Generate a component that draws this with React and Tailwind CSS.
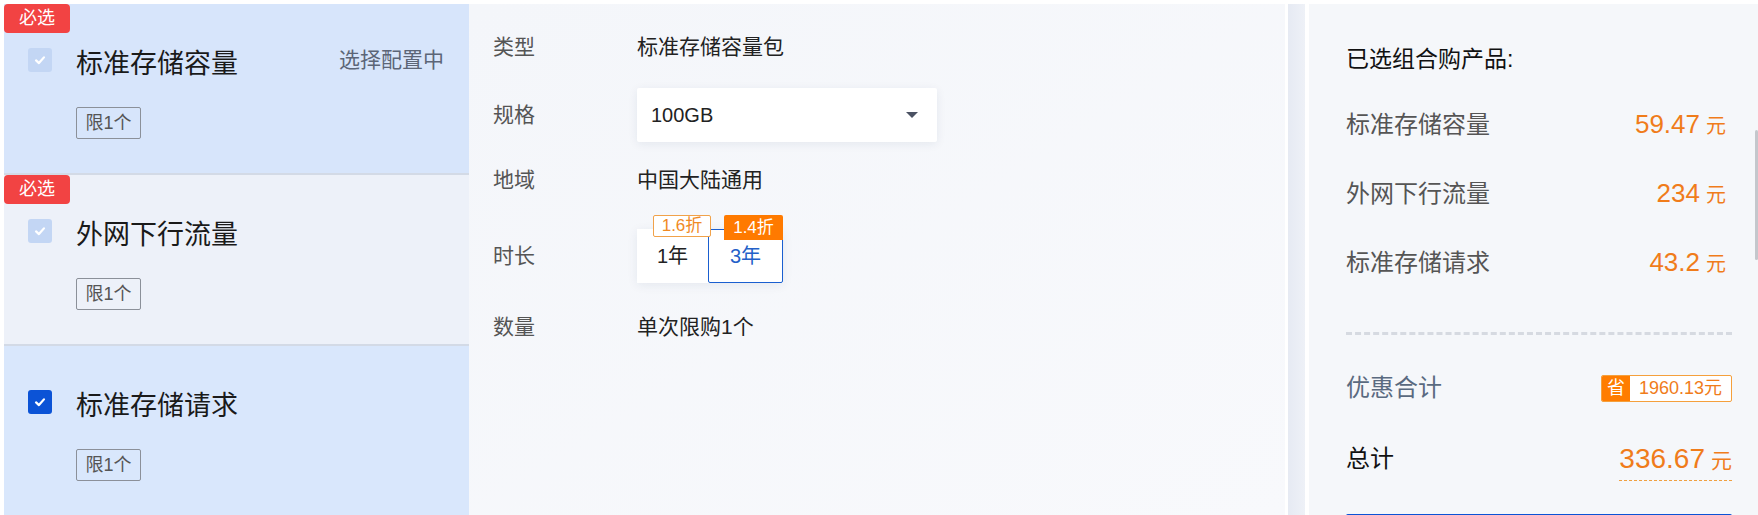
import React from 'react';

const FONT = "font-['Liberation_Sans','Noto_Sans_CJK_SC',sans-serif]";

const PRODUCTS = [
    { name: '标准存储容量', required: true, checked: false, active: true, bg: 'bg-[#d7e5fb]' },
    { name: '外网下行流量', required: true, checked: false, active: false, bg: 'bg-[#edf1f9]' },
    { name: '标准存储请求', required: false, checked: true, active: false, bg: 'bg-[#d9e7fc]' },
];

const SUMMARY = [
    { name: '标准存储容量', price: '59.47' },
    { name: '外网下行流量', price: '234' },
    { name: '标准存储请求', price: '43.2' },
];

function Check({ checked }) {
    return (
        <span className={`flex h-6 w-6 shrink-0 items-center justify-center rounded-[3px] ${checked ? 'bg-[#0b53d6]' : 'bg-[#c3d6f4]'}`}>
            <svg viewBox="0 0 16 16" className="h-[14px] w-[14px]" fill="none" stroke="white" strokeWidth="2.6" strokeLinecap="round" strokeLinejoin="round">
                <polyline points="3.5,8.5 6.8,11.5 12.5,5" />
            </svg>
        </span>
    );
}

function ProductCard({ item }) {
    return (
        <div className={`relative h-[170px] pl-6 pr-[25px] pt-[40px] ${item.bg}`}>
            {item.required ? (
                <span className="absolute left-0 top-0 flex h-[29px] w-[66px] items-center justify-center rounded-[4px] bg-[#f24343] text-[18px] text-white">必选</span>
            ) : null}
            <div className="flex h-8 items-center">
                <Check checked={item.checked} />
                <span className="ml-6 mt-2 flex-1 text-[27px] text-[#1a1a1a]">{item.name}</span>
                {item.active ? <span className="text-[21px] text-[#5c6577]">选择配置中</span> : null}
            </div>
            <div className="ml-12 mt-[31px] flex h-8 w-[65px] items-center justify-center rounded-[2px] border border-[#8b9099] text-[18px] text-[#555]">限1个</div>
        </div>
    );
}

function Row({ label, className, children }) {
    return (
        <div className={`flex items-center ${className}`}>
            <span className="w-[144px] shrink-0 text-[21px] text-[#555]">{label}</span>
            {children}
        </div>
    );
}

export default function App() {
    return (
        <div className={`${FONT} relative flex h-[515px] w-[1758px] overflow-hidden bg-white pl-1 pt-1`}>
            <div className="flex w-[465px] shrink-0 flex-col gap-[2px] bg-[#d3dae6]">
                {PRODUCTS.map((item) => (
                    <ProductCard key={item.name} item={item} />
                ))}
            </div>

            <div className="w-[816px] shrink-0 bg-gradient-to-br from-[#f4f6fa] to-[#f8f9fc] pl-6">
                <Row label="类型" className="mt-[23px] h-10">
                    <span className="text-[21px] text-[#222]">标准存储容量包</span>
                </Row>
                <Row label="规格" className="mt-[21px] h-[54px]">
                    <div className="flex h-[54px] w-[300px] items-center justify-between rounded-[2px] bg-white pl-[14px] pr-[19px] shadow-[0_2px_10px_rgba(30,50,90,0.08)]">
                        <span className="text-[20px] text-[#222]">100GB</span>
                        <span className="h-0 w-0 border-x-[6px] border-t-[6px] border-x-transparent border-t-[#4b5263]" />
                    </div>
                </Row>
                <Row label="地域" className="mt-[18px] h-10">
                    <span className="text-[21px] text-[#222]">中国大陆通用</span>
                </Row>
                <Row label="时长" className="mt-[29px] h-[54px]">
                    <div className="relative flex h-[54px] shadow-[0_2px_10px_rgba(30,50,90,0.08)]">
                        <div className="flex w-[71px] items-center justify-center bg-white text-[20px] text-[#222]">1年</div>
                        <div className="flex w-[75px] items-center justify-center rounded-[2px] border border-[#1a5fd0] bg-white text-[20px] text-[#2360c8]">3年</div>
                        <span className="absolute left-4 top-[-14px] flex h-[22px] w-[58px] items-center justify-center rounded-[2px] border border-[#f1a24a] bg-white text-[17px] text-[#f08a24]">1.6折</span>
                        <span className="absolute left-[87px] top-[-14px] flex h-[25px] w-[59px] items-center justify-center rounded-t-[2px] bg-[#ff7a00] text-[17px] text-white">1.4折</span>
                    </div>
                </Row>
                <Row label="数量" className="mt-[24px] h-10">
                    <span className="text-[21px] text-[#222]">单次限购1个</span>
                </Row>
            </div>

            <div className="w-[3px] shrink-0 bg-white" />
            <div className="w-[17px] shrink-0 bg-gradient-to-r from-[#e6eaf3] to-[#eef1f7]" />
            <div className="w-1 shrink-0 bg-white" />

            <div className="flex-1 bg-[#f5f7fa] pl-[37px] pr-[26px] pt-[35px]">
                <div className="flex h-10 items-center text-[23px] text-[#111]">已选组合购产品:</div>
                {SUMMARY.map((item, index) => (
                    <div key={item.name} className={`flex h-[69px] items-center justify-between pr-[6px] ${index === 0 ? 'mt-[11px]' : ''}`}>
                        <span className="text-[24px] text-[#555]">{item.name}</span>
                        <span className="text-[#f07c1a]">
                            <span className="text-[26px]">{item.price}</span>
                            <span className="ml-[6px] text-[20px]">元</span>
                        </span>
                    </div>
                ))}
                <div className="mt-[35px] border-t-[3px] border-dashed border-[#d6dae1]" />
                <div className="mt-[33px] flex h-10 items-center justify-between">
                    <span className="text-[24px] text-[#5a6a80]">优惠合计</span>
                    <span className="flex h-[27px] items-stretch overflow-hidden rounded-[2px] border border-[#f5a03c] bg-white">
                        <span className="flex w-[28px] items-center justify-center bg-[#ff7d00] text-[18px] text-white">省</span>
                        <span className="flex items-center px-[9px] text-[18px] text-[#f07c1a]">1960.13元</span>
                    </span>
                </div>
                <div className="mt-[31px] flex h-10 items-center justify-between">
                    <span className="text-[24px] text-[#111]">总计</span>
                    <span className="border-b border-dashed border-[#f0a040] text-[#f07c1a]">
                        <span className="text-[28px]">336.67</span>
                        <span className="ml-[6px] text-[21px]">元</span>
                    </span>
                </div>
                <div className="mt-[35px] h-12 rounded-[2px] bg-[#0b53d6]" />
            </div>

            <div className="absolute right-0 top-[130px] h-[130px] w-[3px] rounded-full bg-[#c4c7cc]" />
        </div>
    );
}
